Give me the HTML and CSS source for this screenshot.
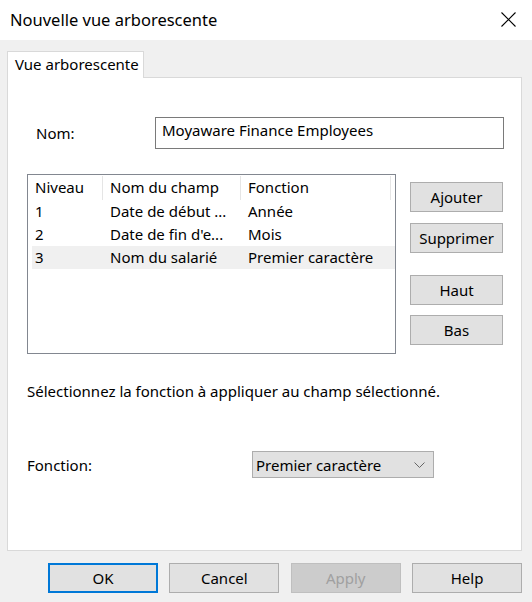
FILE: index.html
```html
<!DOCTYPE html>
<html lang="fr">
<head>
<meta charset="utf-8">
<title>Nouvelle vue arborescente</title>
<link rel="stylesheet" href="styles.css">
</head>
<body>
<div class="window">
  <div class="titlebar">
    <span class="title">Nouvelle vue arborescente</span>
    <svg class="close" width="15" height="15" viewBox="0 0 15 15"><path d="M0.5 0.5 L14.5 14.5 M14.5 0.5 L0.5 14.5" stroke="#000" stroke-width="1.1" fill="none"/></svg>
  </div>
  <div class="client">
    <div class="tabs"><div class="tab">Vue arborescente</div></div>
    <div class="panel">
      <div class="name-row">
        <span class="name-label">Nom:</span>
        <div class="input">Moyaware Finance Employees</div>
      </div>
      <div class="list-area">
        <div class="list">
          <div class="grid head">
            <div class="cell c1">Niveau</div>
            <div class="cell c2">Nom du champ</div>
            <div class="cell c3">Fonction</div>
          </div>
          <div class="grid row">
            <div class="cell c1">1</div>
            <div class="cell c2">Date de début ...</div>
            <div class="cell c3">Année</div>
          </div>
          <div class="grid row">
            <div class="cell c1">2</div>
            <div class="cell c2">Date de fin d'e...</div>
            <div class="cell c3">Mois</div>
          </div>
          <div class="grid row selected">
            <div class="cell c1">3</div>
            <div class="cell c2">Nom du salarié</div>
            <div class="cell c3">Premier caractère</div>
          </div>
        </div>
        <div class="side-buttons">
          <div class="btn side">Ajouter</div>
          <div class="btn side gap-s">Supprimer</div>
          <div class="btn side gap-l">Haut</div>
          <div class="btn side gap-s2">Bas</div>
        </div>
      </div>
      <div class="hint">Sélectionnez la fonction à appliquer au champ sélectionné.</div>
      <div class="func-row">
        <span class="func-label">Fonction:</span>
        <div class="combo">
          <span>Premier caractère</span>
          <svg class="chev" width="11" height="6" viewBox="0 0 11 6"><path d="M0.5 0.5 L5.5 5.5 L10.5 0.5" stroke="#666" stroke-width="1" fill="none"/></svg>
        </div>
      </div>
    </div>
    <div class="footer">
      <div class="btn foot default">OK</div>
      <div class="btn foot">Cancel</div>
      <div class="btn foot disabled">Apply</div>
      <div class="btn foot">Help</div>
    </div>
  </div>
</div>
</body>
</html>
```
FILE: styles.css
```css
* { box-sizing: border-box; }
html, body { margin: 0; padding: 0; }
body {
  width: 532px;
  height: 602px;
  overflow: hidden;
  font-family: "Noto Sans", "DejaVu Sans", sans-serif;
  font-size: 15px;
  color: #000;
  background: #f0f0f0;
}
.window { width: 532px; height: 602px; display: flex; flex-direction: column; }
.titlebar {
  height: 40px;
  background: #fff;
  display: flex;
  align-items: center;
  justify-content: space-between;
  padding: 0 16px 0 10px;
}
.title { font-size: 16.5px; line-height: 20px; margin-top: -1px; }
.close { display: block; margin-top: -2px; }
.client {
  flex: 1;
  background: #f0f0f0;
  padding: 11px 10px 0 7px;
}
.tabs { display: flex; height: 26px; }
.tab {
  width: 137px;
  height: 27px;
  background: #fff;
  border: 1px solid #d9d9d9;
  border-bottom: none;
  padding-left: 7px;
  line-height: 24px;
  position: relative;
  z-index: 1;
}
.panel {
  height: 474px;
  background: #fff;
  border: 1px solid #d9d9d9;
}
.name-row {
  display: flex;
  align-items: center;
  margin-top: 39px;
}
.name-label { width: 119px; margin-left: 28px; }
.input {
  width: 349px;
  height: 32px;
  border: 1px solid #7a7a7a;
  padding-left: 6px;
  line-height: 24px;
}
.list-area { display: flex; margin-top: 25px; margin-left: 19px; }
.list {
  width: 369px;
  height: 180px;
  border: 1px solid #828790;
  padding-left: 4px;
}
.grid { display: grid; grid-template-columns: 71px 138px 150px; }
.head { height: 25px; }
.head .cell { border-right: 1px solid #e5e5e5; margin-top: 1px; line-height: 23px; }
.row { height: 23px; line-height: 22px; }
.cell { white-space: nowrap; overflow: hidden; padding-left: 7px; }
.cell.c1 { padding-left: 3px; }
.selected { background: #f0f0f0; }
.side-buttons { display: flex; flex-direction: column; margin-left: 14px; margin-top: 8px; }
.btn {
  background: #e1e1e1;
  border: 1px solid #adadad;
  display: flex;
  align-items: center;
  justify-content: center;
  height: 30px;
}
.side { width: 93px; }
.gap-s { margin-top: 11px; }
.gap-l { margin-top: 22px; }
.gap-s2 { margin-top: 10px; }
.hint { margin-top: 27px; margin-left: 19px; line-height: 20px; }
.func-row { display: flex; align-items: center; margin-top: 50px; margin-left: 19px; }
.func-label { width: 225px; }
.combo {
  width: 182px;
  height: 27px;
  background: #e1e1e1;
  border: 1px solid #adadad;
  display: flex;
  align-items: center;
  justify-content: space-between;
  padding: 0 8px 0 3px;
}
.chev { display: block; }
.footer { display: flex; gap: 11.5px; margin-top: 12px; padding-left: 41px; }
.foot { width: 111px; }
.default { border: 2px solid #0078d7; }
.disabled { background: #cccccc; border-color: #bfbfbf; color: #a0a0a0; }
```
